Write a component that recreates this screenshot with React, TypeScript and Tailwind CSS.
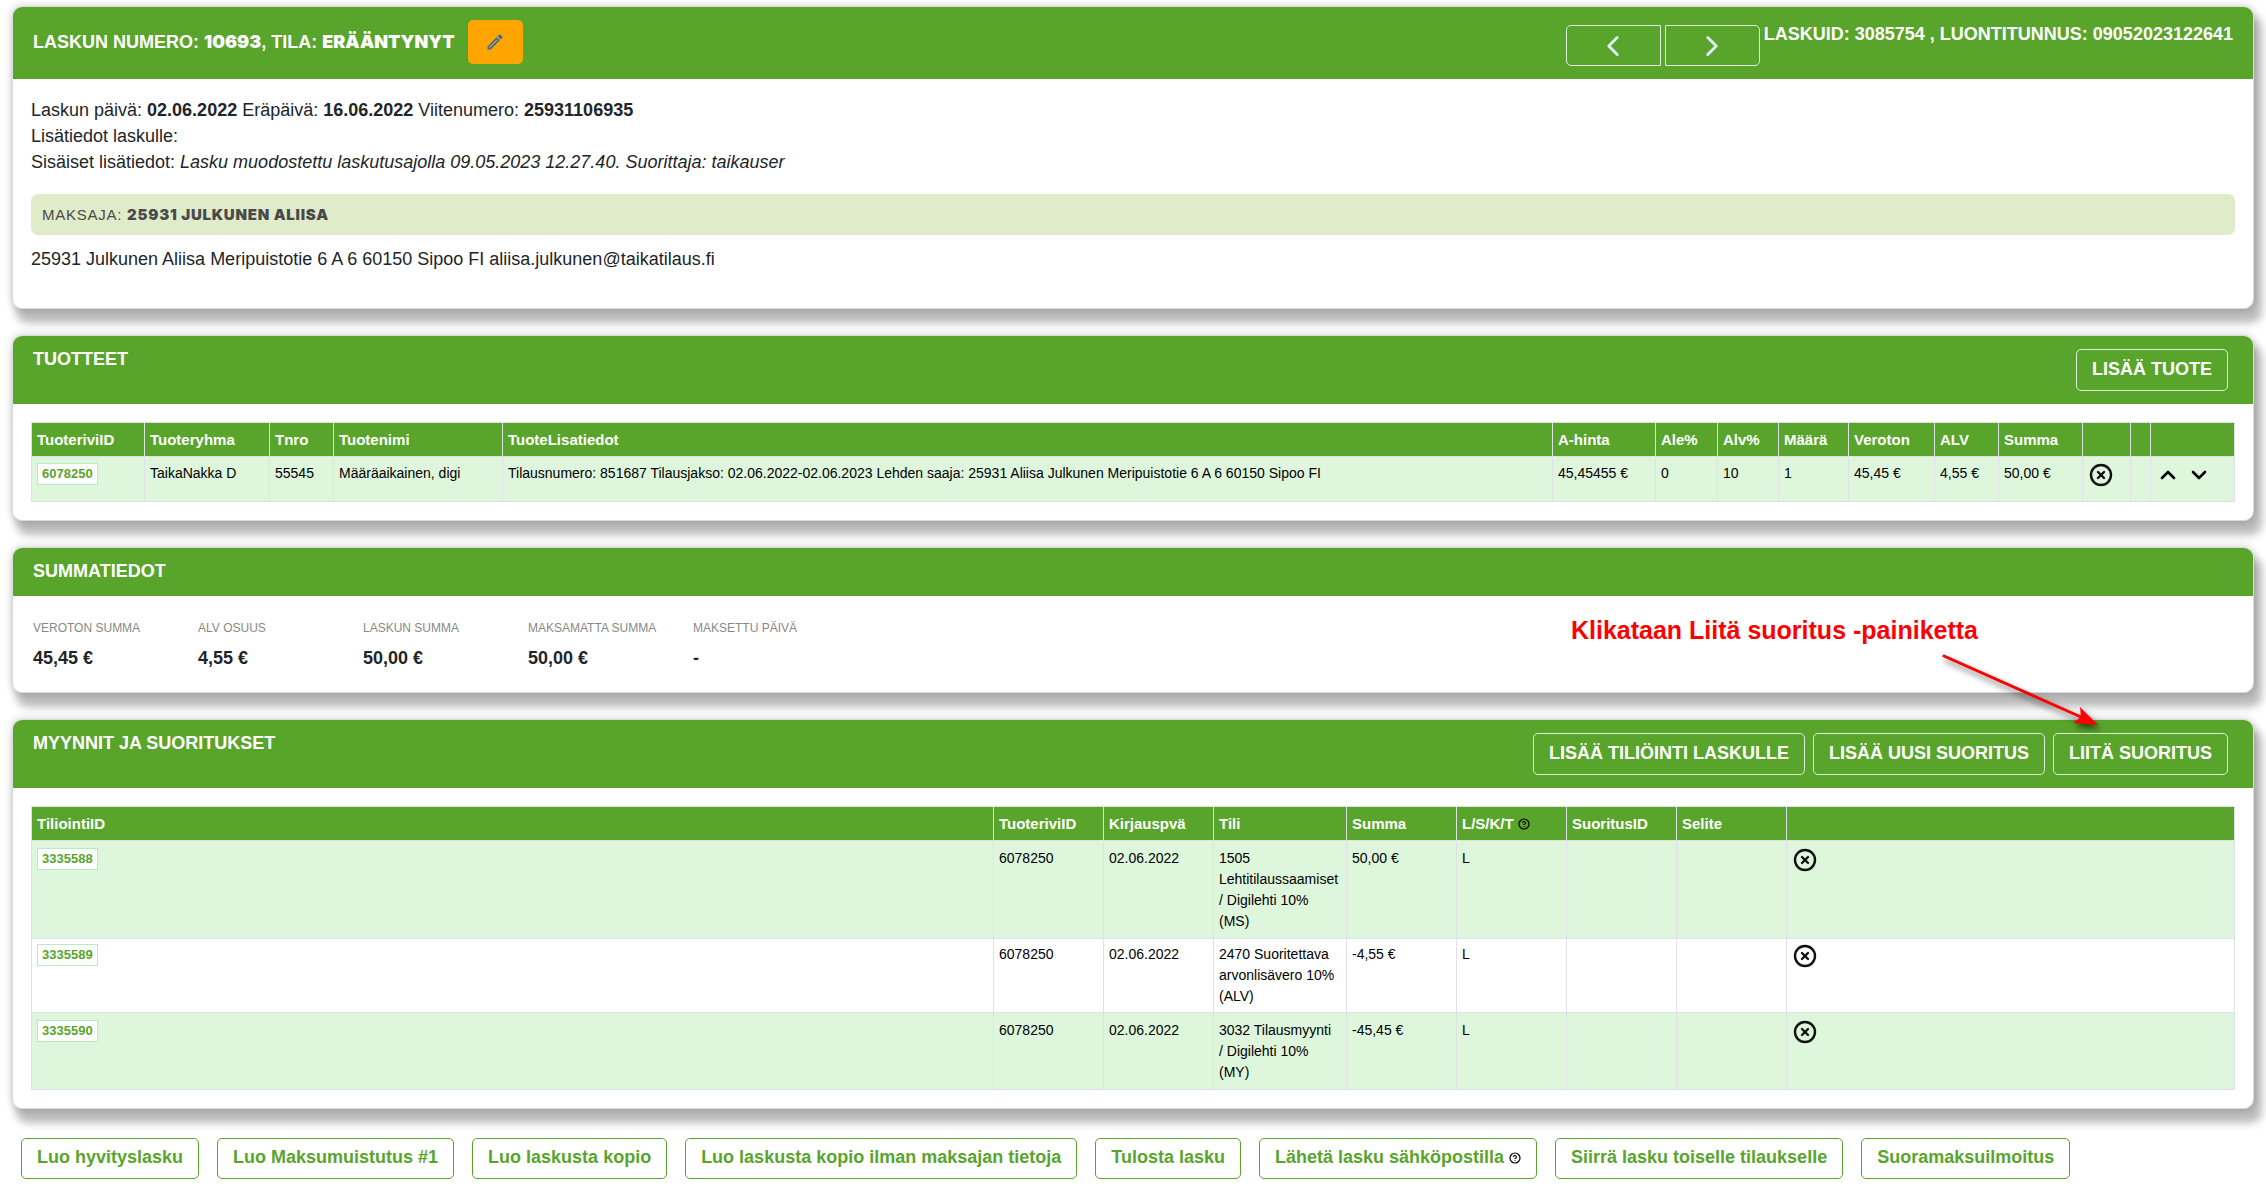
import React from 'react'
import { ChevronDown, ChevronLeft, ChevronRight, ChevronUp, CircleHelp, CircleX } from 'lucide-react'
import { MdOutlineModeEdit } from 'react-icons/md'

interface CardProps {
  title: React.ReactNode
  actions?: React.ReactNode
  children: React.ReactNode
}

const Card: React.FC<CardProps> = ({ title, actions, children }) => (
  <section className="rounded-[10px] border border-[#d9dcdf] bg-white shadow-[6px_12px_8px_2px_rgba(0,0,0,0.27),0_0_8px_rgba(0,0,0,0.2)]">
    <header className="flex items-start justify-between rounded-t-[9px] bg-[#59a52c] pl-5 text-white">
      <h2 className="pt-[10px] pb-[11px] text-[18px] leading-[27px] font-bold">{title}</h2>
      {actions}
    </header>
    {children}
  </section>
)

const HeaderButton: React.FC<{ children: React.ReactNode }> = ({ children }) => (
  <button type="button" className="h-[42px] rounded-[5px] border border-[#dcefdc] px-[15px] pb-[2px] text-[18px] leading-[27px] font-bold">
    {children}
  </button>
)

const IdLink: React.FC<{ id: string }> = ({ id }) => (
  <a href={`#${id}`} className="inline-block border border-[#b9ebc1] bg-white px-1 text-[13px] leading-5 font-bold text-[#59a52c]">
    {id}
  </a>
)

const DeleteButton = () => (
  <button type="button" aria-label="Poista" className="ml-px block text-[#111]">
    <CircleX size={24} strokeWidth={2.4} />
  </button>
)

const th = 'border border-[#dee2e6] px-[5px] pt-[6px] pb-[6px] text-left text-[15px] leading-[21px] font-bold text-white'
const td = 'border border-[#dee2e6] px-[5px] align-top text-black'

const summary = [
  { label: 'VEROTON SUMMA', value: '45,45 €' },
  { label: 'ALV OSUUS', value: '4,55 €' },
  { label: 'LASKUN SUMMA', value: '50,00 €' },
  { label: 'MAKSAMATTA SUMMA', value: '50,00 €' },
  { label: 'MAKSETTU PÄIVÄ', value: '-' }
]

const entries = [
  { id: '3335588', row: '6078250', date: '02.06.2022', account: '1505 Lehtitilaussaamiset /\u00a0Digilehti 10% (MS)', sum: '50,00 €', type: 'L' },
  { id: '3335589', row: '6078250', date: '02.06.2022', account: '2470 Suoritettava arvonlisävero 10% (ALV)', sum: '-4,55 €', type: 'L' },
  { id: '3335590', row: '6078250', date: '02.06.2022', account: '3032 Tilausmyynti /\u00a0Digilehti 10% (MY)', sum: '-45,45 €', type: 'L' }
]

const ProductTable = () => (
  <table className="w-full table-fixed border-collapse text-[14px] leading-[21px]">
    <colgroup>
      <col className="w-[113px]" />
      <col className="w-[125px]" />
      <col className="w-[64px]" />
      <col className="w-[169px]" />
      <col />
      <col className="w-[103px]" />
      <col className="w-[62px]" />
      <col className="w-[61px]" />
      <col className="w-[70px]" />
      <col className="w-[86px]" />
      <col className="w-[64px]" />
      <col className="w-[84px]" />
      <col className="w-[48px]" />
      <col className="w-[20px]" />
      <col className="w-[84px]" />
    </colgroup>
    <thead>
      <tr className="bg-[#59a52c]">
        {['TuoteriviID', 'Tuoteryhma', 'Tnro', 'Tuotenimi', 'TuoteLisatiedot', 'A-hinta', 'Ale%', 'Alv%', 'Määrä', 'Veroton', 'ALV', 'Summa', '', '', ''].map((h, i) => (
          <th key={i} className={th}>{h}</th>
        ))}
      </tr>
    </thead>
    <tbody>
      <tr className="bg-[#def6db] *:pt-[6px] *:pb-[14px]">
        <td className={td}><IdLink id="6078250" /></td>
        <td className={td}>TaikaNakka D</td>
        <td className={td}>55545</td>
        <td className={td}>Määräaikainen, digi</td>
        <td className={td}>Tilausnumero: 851687 Tilausjakso: 02.06.2022-02.06.2023 Lehden saaja: 25931 Aliisa Julkunen Meripuistotie 6 A 6 60150 Sipoo FI</td>
        <td className={td}>45,45455 €</td>
        <td className={td}>0</td>
        <td className={td}>10</td>
        <td className={td}>1</td>
        <td className={td}>45,45 €</td>
        <td className={td}>4,55 €</td>
        <td className={td}>50,00 €</td>
        <td className={td}><DeleteButton /></td>
        <td className={td}></td>
        <td className={td}>
          <div className="flex gap-[7px]">
            <button type="button" aria-label="Siirrä ylös"><ChevronUp size={24} strokeWidth={2.6} /></button>
            <button type="button" aria-label="Siirrä alas"><ChevronDown size={24} strokeWidth={2.6} /></button>
          </div>
        </td>
      </tr>
    </tbody>
  </table>
)

const EntryTable = () => (
  <table className="w-full table-fixed border-collapse text-[14px] leading-[21px]">
    <colgroup>
      <col />
      <col className="w-[110px]" />
      <col className="w-[110px]" />
      <col className="w-[133px]" />
      <col className="w-[110px]" />
      <col className="w-[110px]" />
      <col className="w-[110px]" />
      <col className="w-[110px]" />
      <col className="w-[448px]" />
    </colgroup>
    <thead>
      <tr className="bg-[#59a52c]">
        <th className={th}>TiliointiID</th>
        <th className={th}>TuoteriviID</th>
        <th className={th}>Kirjauspvä</th>
        <th className={th}>Tili</th>
        <th className={th}>Summa</th>
        <th className={th}>
          <span className="flex items-center gap-1">L/S/K/T <CircleHelp size={12} strokeWidth={2.4} className="text-black" /></span>
        </th>
        <th className={th}>SuoritusID</th>
        <th className={th}>Selite</th>
        <th className={th}></th>
      </tr>
    </thead>
    <tbody>
      {entries.map(e => (
        <tr key={e.id} className="odd:bg-[#def6db] odd:*:pt-[7px] odd:*:pb-[6px] even:*:py-[5px]">
          <td className={td}><IdLink id={e.id} /></td>
          <td className={td}>{e.row}</td>
          <td className={td}>{e.date}</td>
          <td className={td}>{e.account}</td>
          <td className={td}>{e.sum}</td>
          <td className={td}>{e.type}</td>
          <td className={td}></td>
          <td className={td}></td>
          <td className={td}><DeleteButton /></td>
        </tr>
      ))}
    </tbody>
  </table>
)

const footerActions: React.ReactNode[] = [
  'Luo hyvityslasku',
  'Luo Maksumuistutus #1',
  'Luo laskusta kopio',
  'Luo laskusta kopio ilman maksajan tietoja',
  'Tulosta lasku',
  <>Lähetä lasku sähköpostilla <CircleHelp size={12} strokeWidth={2.4} className="text-black" /></>,
  'Siirrä lasku toiselle tilaukselle',
  'Suoramaksuilmoitus'
]

export default function App() {
  return (
    <main className="flex flex-col gap-[26px] bg-white px-3 pt-[6px] pb-3 font-['Liberation_Sans',Arial,sans-serif] text-[#212529]">
      <Card
        title={
          <span className="flex items-center gap-[13px] pt-[3px] pb-1">
            <span>
              LASKUN NUMERO: <span className="font-['Inter'] font-black">10693</span>, TILA: <span className="font-['Inter'] font-black">ERÄÄNTYNYT</span>
            </span>
            <button type="button" aria-label="Muokkaa" className="flex h-[44px] w-[55px] items-center justify-center rounded-[5px] bg-[#ffa500] text-[#35699f]">
              <MdOutlineModeEdit size={20} />
            </button>
          </span>
        }
        actions={
          <div className="flex items-start gap-1 pt-[14px] pr-5 text-[18px] leading-[27px] font-bold">
            <div className="flex gap-1 pt-1 text-[#dff3f3]">
              <button type="button" aria-label="Edellinen" className="flex h-[41px] w-[95px] items-center justify-center rounded-l-[5px] border border-[#dcefdc]">
                <ChevronLeft size={34} />
              </button>
              <button type="button" aria-label="Seuraava" className="flex h-[41px] w-[95px] items-center justify-center rounded-r-[5px] border border-[#dcefdc]">
                <ChevronRight size={34} />
              </button>
            </div>
            <span>LASKUID: 3085754 , LUONTITUNNUS: 09052023122641</span>
          </div>
        }
      >
        <div className="px-[18px] pt-[18px] pb-9 text-[18px] leading-[26px]">
          <p>Laskun päivä: <b>02.06.2022</b> Eräpäivä: <b>16.06.2022</b> Viitenumero: <b>25931106935</b></p>
          <p>Lisätiedot laskulle:</p>
          <p>Sisäiset lisätiedot: <i>Lasku muodostettu laskutusajolla 09.05.2023 12.27.40. Suorittaja: taikauser</i></p>
          <h3 className="mt-[19px] mb-[11px] rounded-[7px] bg-[#dfebc9] px-[11px] py-[7px] text-[15px] leading-[27px] tracking-wider text-[#4a4a4a]">
            MAKSAJA: <span className="font-['Inter'] font-black">25931 JULKUNEN ALIISA</span>
          </h3>
          <p>25931 Julkunen Aliisa Meripuistotie 6 A 6 60150 Sipoo FI aliisa.julkunen@taikatilaus.fi</p>
        </div>
      </Card>

      <Card title="TUOTTEET" actions={<div className="py-[13px] pr-[25px]"><HeaderButton>LISÄÄ TUOTE</HeaderButton></div>}>
        <div className="p-[18px]">
          <ProductTable />
        </div>
      </Card>

      <div className="relative z-10">
        <Card title="SUMMATIEDOT">
          <dl className="flex pt-[23px] pb-5 pl-5">
            {summary.map(s => (
              <div key={s.label} className="w-[165px]">
                <dt className="text-[12px] leading-[18px] text-[#888]">{s.label}</dt>
                <dd className="mt-2 text-[18px] leading-[27px] font-bold">{s.value}</dd>
              </div>
            ))}
          </dl>
        </Card>
        {/* ohjeteksti ja nuoli painikkeeseen */}
        <p className="absolute top-[65px] right-[276px] text-[25px] leading-[36px] font-bold text-[#f00]">Klikataan Liitä suoritus -painiketta</p>
        <svg width="170" height="90" viewBox="0 0 170 90" className="pointer-events-none absolute top-[103px] right-[146px] drop-shadow-[2px_4px_3px_rgba(0,0,0,0.6)]">
          <path d="M6 6 L143 67" stroke="#f00" strokeWidth="3" strokeLinecap="round" />
          <path d="M160 75 L135 73 L143 67 L142 57 Z" fill="#f00" />
        </svg>
      </div>

      <Card
        title="MYYNNIT JA SUORITUKSET"
        actions={
          <div className="flex gap-2 py-[13px] pr-[25px]">
            <HeaderButton>LISÄÄ TILIÖINTI LASKULLE</HeaderButton>
            <HeaderButton>LISÄÄ UUSI SUORITUS</HeaderButton>
            <HeaderButton>LIITÄ SUORITUS</HeaderButton>
          </div>
        }
      >
        <div className="p-[18px]">
          <EntryTable />
        </div>
      </Card>

      <div className="flex flex-wrap gap-[18px] pt-[3px] pl-[9px]">
        {footerActions.map((label, i) => (
          <button
            key={i}
            type="button"
            className="flex h-[41px] items-center gap-[5px] rounded-[5px] border border-[#59a52c] bg-white px-[15px] pb-[2px] text-[18px] leading-[27px] font-bold text-[#59a52c]"
          >
            {label}
          </button>
        ))}
      </div>
    </main>
  )
}
